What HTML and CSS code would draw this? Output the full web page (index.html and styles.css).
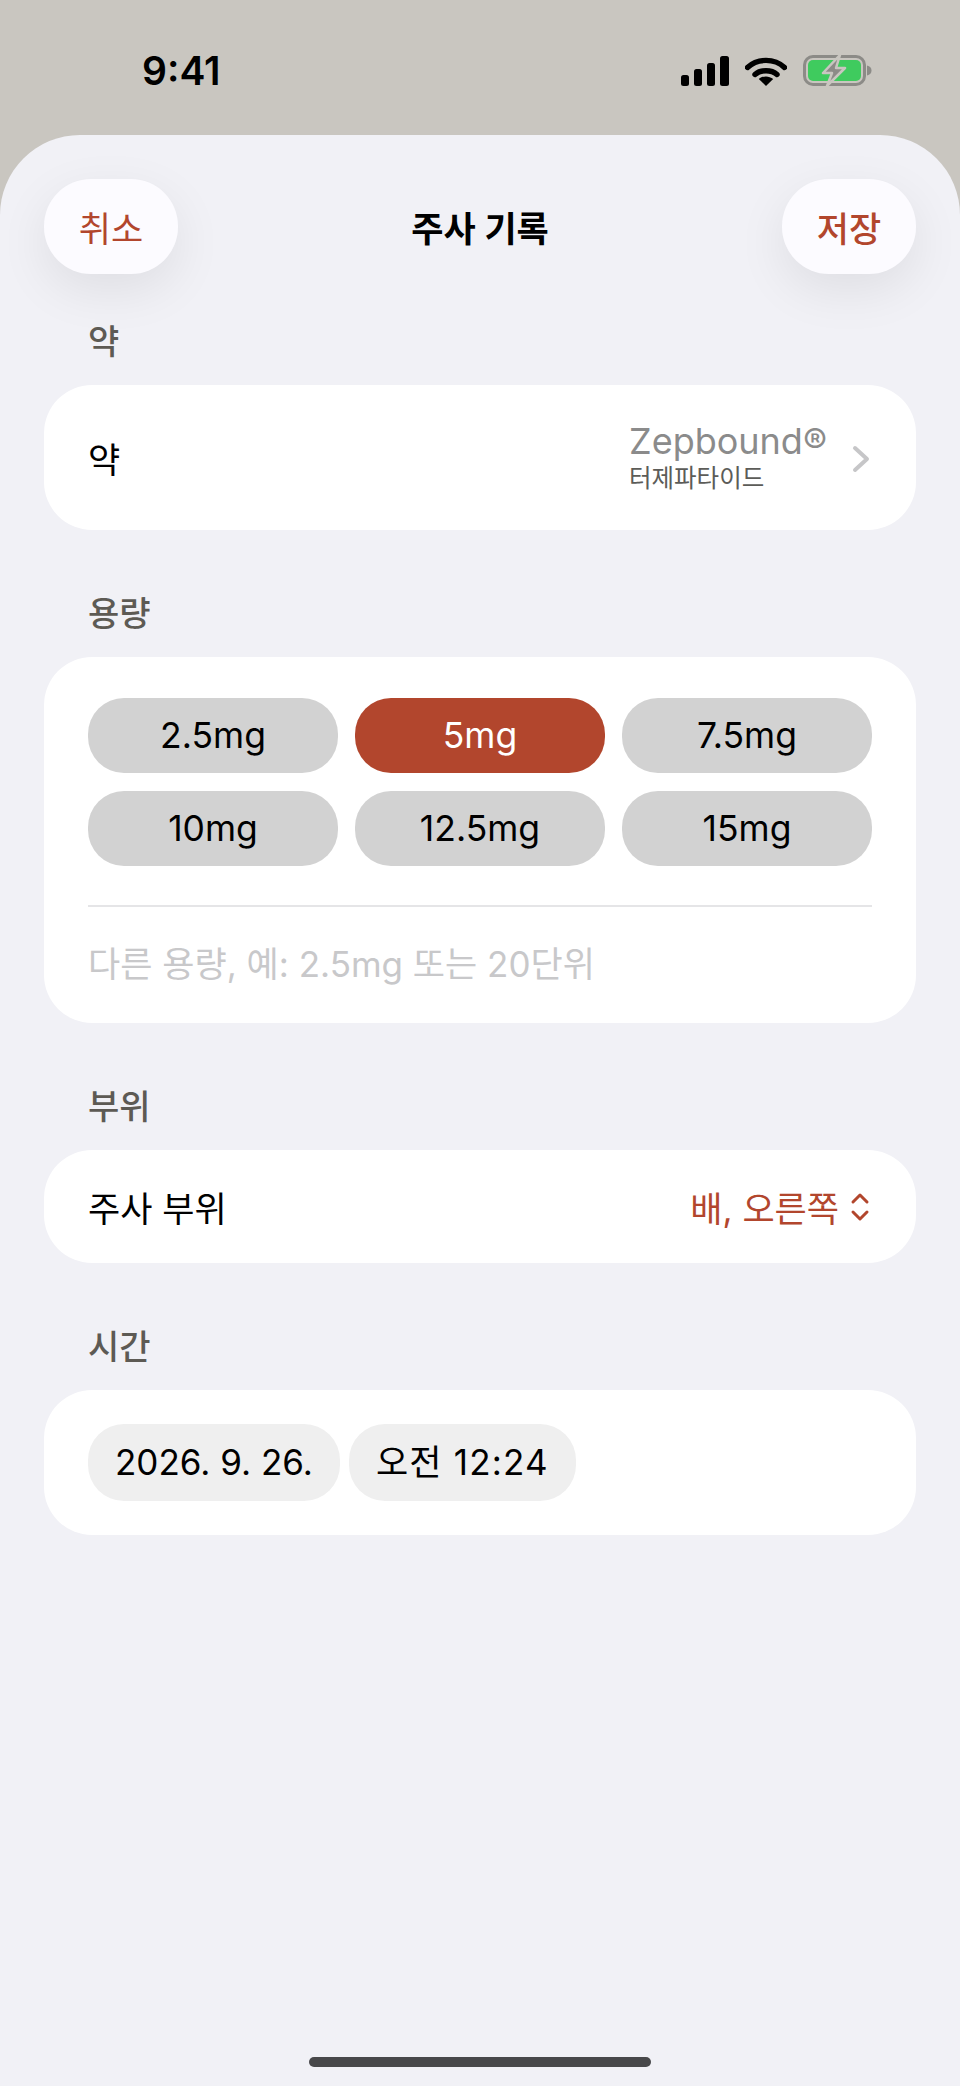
FILE: index.html
```html
<!DOCTYPE html>
<html lang="ko">
<head>
    <meta charset="UTF-8">
    <title>주사 기록</title>
    <link rel="stylesheet" href="styles.css">
</head>
<body>
<div class="phone">
    <div class="status">
        <span class="clock">9:41</span>
        <div class="status-icons">
            <svg class="signal" width="48" height="30" viewBox="0 0 48 30">
                <rect x="0" y="19" width="8" height="11" rx="2.5"/>
                <rect x="13" y="13" width="8" height="17" rx="2.5"/>
                <rect x="26" y="7" width="8" height="23" rx="2.5"/>
                <rect x="39" y="0" width="9" height="30" rx="2.5"/>
            </svg>
            <svg class="wifi" width="42" height="30" viewBox="0 0 42 30">
                <path d="M2.5 11.5C12.5 2 29.5 2 39.5 11.5" fill="none" stroke="#000" stroke-width="5.4" stroke-linecap="round"/>
                <path d="M10 18.5C15.5 13.5 26.5 13.5 32 18.5" fill="none" stroke="#000" stroke-width="5.4" stroke-linecap="round"/>
                <path d="M21 30L13.8 23C18 19.5 24 19.5 28.2 23Z"/>
            </svg>
            <svg class="battery" width="69" height="31" viewBox="0 0 69 31">
                <rect x="1.5" y="1.5" width="60" height="28" rx="8.5" fill="none" stroke="#8c8b87" stroke-width="3"/>
                <rect x="5" y="5" width="53" height="21" rx="5" fill="#3fcb5e"/>
                <path d="M64 10.5c3 .6 4.5 2.5 4.5 5s-1.5 4.4-4.5 5z" fill="#8c8b87"/>
                <path d="M37 0L20 18h9l-5 13 18-18h-9z" fill="#8c8b87" stroke="#c9c6c0" stroke-width="2.5" stroke-linejoin="round"/>
            </svg>
        </div>
    </div>

    <div class="sheet">
        <div class="nav">
            <button class="nav-btn">취소</button>
            <span class="nav-title">주사 기록</span>
            <button class="nav-btn nav-save">저장</button>
        </div>

        <h2 class="label first">약</h2>
        <div class="card row drug-row">
            <span>약</span>
            <div class="row-right">
                <div class="drug">
                    <div class="drug-name">Zepbound®</div>
                    <div class="drug-sub">터제파타이드</div>
                </div>
                <svg class="chevron" width="18" height="28" viewBox="0 0 18 28">
                    <path d="M3 3L15 14L3 25" fill="none" stroke="#c6c6c8" stroke-width="4" stroke-linecap="round" stroke-linejoin="round"/>
                </svg>
            </div>
        </div>

        <h2 class="label">용량</h2>
        <div class="card dose-card">
            <div class="dose-grid">
                <div class="dose">2.5mg</div>
                <div class="dose selected">5mg</div>
                <div class="dose">7.5mg</div>
                <div class="dose">10mg</div>
                <div class="dose">12.5mg</div>
                <div class="dose">15mg</div>
            </div>
            <div class="placeholder">다른 용량, 예: 2.5mg 또는 20단위</div>
        </div>

        <h2 class="label">부위</h2>
        <div class="card row site-row">
            <span>주사 부위</span>
            <div class="row-right site">
                <span>배, 오른쪽</span>
                <svg class="updown" width="20" height="32" viewBox="0 0 20 32">
                    <path d="M3 11L10 4L17 11M3 21L10 28L17 21" fill="none" stroke="#b2462d" stroke-width="3" stroke-linecap="round" stroke-linejoin="round"/>
                </svg>
            </div>
        </div>

        <h2 class="label">시간</h2>
        <div class="card time-card">
            <div class="time-chip">2026. 9. 26.</div>
            <div class="time-chip hour">오전 12:24</div>
        </div>

        <div class="home-bar"></div>
    </div>
</div>
</body>
</html>
```

FILE: styles.css
```css
* {
    margin: 0;
    padding: 0;
    box-sizing: border-box;
}
body {
    background: #c9c6c0;
    font-family: "Inter", "Noto Sans CJK KR", sans-serif;
    color: #000;
}
.phone {
    width: 960px;
    height: 2086px;
    display: flex;
    flex-direction: column;
    overflow: hidden;
}

/* status bar */
.status {
    height: 135px;
    flex: none;
    display: flex;
    justify-content: space-between;
    padding: 55px 88px 0 142px;
}
.clock {
    font-size: 39px;
    line-height: 32px;
    font-weight: 600;
}
.status-icons {
    display: flex;
    gap: 16px;
    align-items: flex-start;
    height: 31px;
}
.signal, .wifi {
    margin-top: 1px;
}

/* sheet */
.sheet {
    flex: 1;
    background: #f1f1f6;
    border-radius: 80px 80px 0 0;
    padding: 44px 44px 0;
    display: flex;
    flex-direction: column;
}
.nav {
    height: 95px;
    flex: none;
    display: flex;
    justify-content: space-between;
    align-items: center;
}
.nav-btn {
    width: 134px;
    height: 95px;
    border: 0;
    border-radius: 47px;
    background: #fcfbff;
    box-shadow: 0 16px 50px rgba(0, 0, 0, 0.08);
    color: #b2462d;
    font-family: inherit;
    font-size: 35px;
}
.nav-save {
    font-weight: 500;
}
.nav-title {
    font-size: 35px;
    font-weight: 600;
}

.label {
    height: 40px;
    line-height: 40px;
    margin: 64px 0 23px 44px;
    font-size: 34px;
    font-weight: 500;
    color: #5d5a54;
}
.label.first {
    margin-top: 48px;
}

.card {
    flex: none;
    background: #fff;
    border-radius: 48px;
}
.row {
    display: flex;
    justify-content: space-between;
    align-items: center;
    padding: 0 44px;
    font-size: 35px;
}
.row-right {
    display: flex;
    align-items: center;
}
.drug-row {
    height: 145px;
}
.drug {
    width: 223px;
}
.drug-name {
    font-size: 36px;
    line-height: 40px;
    color: #8b8b8b;
}
.drug-sub {
    font-size: 24.5px;
    line-height: 34px;
    color: #5c5c58;
}
.chevron {
    margin: 2px 2px 0 0;
}

.dose-card {
    height: 366px;
    padding: 41px 44px 0;
}
.dose-grid {
    display: grid;
    grid-template-columns: repeat(3, 1fr);
    gap: 18px 17px;
    padding-bottom: 39px;
    border-bottom: 2px solid #e5e5e7;
}
.dose {
    height: 75px;
    border-radius: 36px;
    background: #d2d2d2;
    font-size: 35.5px;
    line-height: 75px;
    text-align: center;
}
.dose.selected {
    background: #b2462d;
    color: #fff;
}
.placeholder {
    margin-top: 36px;
    font-size: 35px;
    line-height: 42px;
    color: #c8c8ca;
    white-space: nowrap;
}

.site-row {
    height: 113px;
}
.site {
    gap: 11px;
    color: #b2462d;
}
.updown {
    margin-right: 2px;
}

.time-card {
    height: 145px;
    padding: 34px 44px 0;
    display: flex;
    gap: 9px;
    align-items: flex-start;
}
.time-chip {
    height: 77px;
    padding: 0 27px;
    border-radius: 36px;
    background: #efefef;
    font-size: 35px;
    line-height: 77px;
    white-space: nowrap;
}
.time-chip.hour {
    letter-spacing: 1.2px;
}

.home-bar {
    width: 342px;
    height: 10px;
    margin: auto auto 19px;
    border-radius: 5px;
    background: #48484a;
}
```
